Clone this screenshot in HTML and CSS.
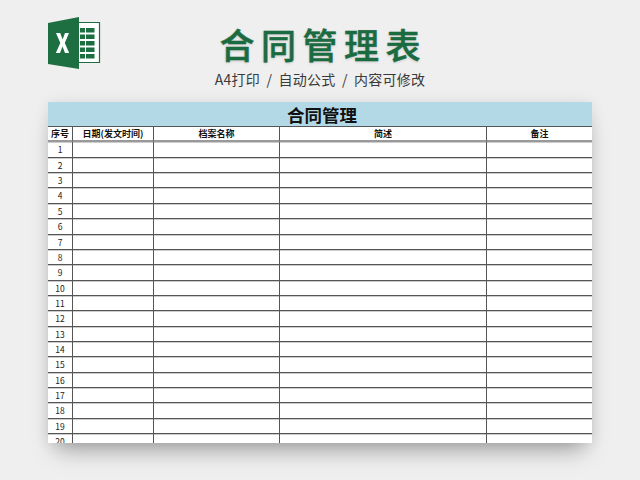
FILE: index.html
```html
<!DOCTYPE html>
<html lang="zh">
<head>
<meta charset="utf-8">
<title>合同管理表</title>
<link rel="stylesheet" href="styles.css">
</head>
<body>
<div class="page">
  <header class="head">
    <svg class="logo" width="54" height="54" viewBox="0 0 54 54">
      <path d="M24 6.5H51.5V46.5H24Z" fill="#fff" stroke="#1d6f42" stroke-width="1.2"/>
      <g fill="#1d6f42">
        <rect x="38" y="12" width="8.5" height="4.5"/><rect x="38" y="18.5" width="8.5" height="4.5"/><rect x="38" y="25" width="8.5" height="4.5"/><rect x="38" y="31.5" width="8.5" height="4.5"/><rect x="38" y="38" width="8.5" height="4.5"/>
        <rect x="32" y="12" width="5" height="4.5"/><rect x="32" y="18.5" width="5" height="4.5"/><rect x="32" y="25" width="5" height="4.5"/><rect x="32" y="31.5" width="5" height="4.5"/><rect x="32" y="38" width="5" height="4.5"/>
      </g>
      <path d="M0 7L31 1V53L0 48Z" fill="#1d6f42"/>
      <path d="M8 17H12.2L14.6 23.4L17 17H21L16.8 27L21.2 37H17L14.5 30.5L12 37H7.8L12.3 27Z" fill="#fff"/>
    </svg>
    <div class="titles">
      <h1 class="title">合同管理表</h1>
      <p class="subtitle">A4打印 / 自动公式 / 内容可修改</p>
    </div>
  </header>
  <main class="sheet">
    <div class="band">合同管理</div>
    <div class="grid">
      <div class="hd">序号</div><div class="hd">日期(发文时间)</div><div class="hd">档案名称</div><div class="hd">简述</div><div class="hd last">备注</div>
      <div class="no">1</div><div></div><div></div><div></div><div class="last"></div>
      <div class="no">2</div><div></div><div></div><div></div><div class="last"></div>
      <div class="no">3</div><div></div><div></div><div></div><div class="last"></div>
      <div class="no">4</div><div></div><div></div><div></div><div class="last"></div>
      <div class="no">5</div><div></div><div></div><div></div><div class="last"></div>
      <div class="no">6</div><div></div><div></div><div></div><div class="last"></div>
      <div class="no">7</div><div></div><div></div><div></div><div class="last"></div>
      <div class="no">8</div><div></div><div></div><div></div><div class="last"></div>
      <div class="no">9</div><div></div><div></div><div></div><div class="last"></div>
      <div class="no">10</div><div></div><div></div><div></div><div class="last"></div>
      <div class="no">11</div><div></div><div></div><div></div><div class="last"></div>
      <div class="no">12</div><div></div><div></div><div></div><div class="last"></div>
      <div class="no">13</div><div></div><div></div><div></div><div class="last"></div>
      <div class="no">14</div><div></div><div></div><div></div><div class="last"></div>
      <div class="no">15</div><div></div><div></div><div></div><div class="last"></div>
      <div class="no">16</div><div></div><div></div><div></div><div class="last"></div>
      <div class="no">17</div><div></div><div></div><div></div><div class="last"></div>
      <div class="no">18</div><div></div><div></div><div></div><div class="last"></div>
      <div class="no">19</div><div></div><div></div><div></div><div class="last"></div>
      <div class="no">20</div><div></div><div></div><div></div><div class="last"></div>
    </div>
  </main>
</div>
</body>
</html>
```
FILE: styles.css
```css
* { box-sizing: border-box; }
html, body { margin: 0; padding: 0; }
body {
  width: 640px;
  height: 480px;
  overflow: hidden;
  background: #efefef;
  font-family: "Noto Sans CJK SC", "Liberation Sans", sans-serif;
}
.page {
  position: relative;
  width: 640px;
  height: 480px;
  padding: 0 48px;
  display: flex;
  flex-direction: column;
}
.head {
  height: 102px;
  flex: none;
  position: relative;
}
.logo {
  position: absolute;
  left: 0;
  top: 16px;
}
.titles {
  display: flex;
  flex-direction: column;
  align-items: center;
  padding-top: 21px;
}
.title {
  margin: 0 -6.5px 0 0;
  font-size: 35px;
  line-height: 46px;
  font-weight: 500;
  -webkit-text-stroke: .5px #1b6b41;
  letter-spacing: 6.5px;
  color: #1b6b41;
  text-shadow: 0 1px 3px rgba(0,0,0,.18);
}
.subtitle {
  margin: 0;
  padding-top: 2px;
  font-size: 14px;
  line-height: 20px;
  font-weight: 400;
  letter-spacing: .25px;
  word-spacing: 3px;
  color: #3a3a3a;
}
.sheet {
  width: 544px;
  height: 341px;
  flex: none;
  overflow: hidden;
  background: #fff;
  box-shadow: 0 14px 22px -8px rgba(0,0,0,.35), 0 0 14px rgba(0,0,0,.08);
}
.band {
  height: 24px;
  padding-left: 4px;
  background: #b3d9e6;
  text-align: center;
  font-size: 17.5px;
  line-height: 25px;
  font-weight: 700;
  color: #111;
}
.grid {
  display: grid;
  grid-template-columns: 25px 81px 126px 207px 105px;
  grid-auto-rows: 15.37px;
  border-top: 1px solid #555;
}
.grid > div {
  border-right: 1px solid #555;
  border-bottom: 1px solid #555;
  box-shadow: 0 1px 0 rgba(0,0,0,.2);
  text-align: center;
  font-size: 8.5px;
  line-height: 14px;
  color: #222;
  overflow: hidden;
}
.grid > .last { border-right: 0; }
.grid > .hd {
  font-weight: 700;
  font-size: 9px;
  line-height: 14px;
  color: #111;
  border-bottom: 2px solid #999;
}
```
